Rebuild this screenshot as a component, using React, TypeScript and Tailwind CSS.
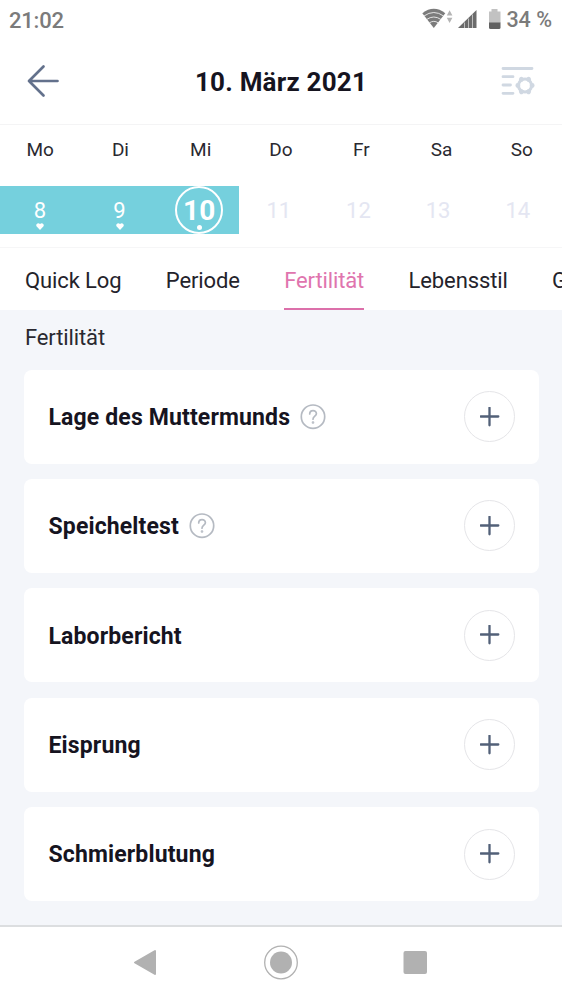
import { useState } from 'react'

const WEEKDAYS = ['Mo', 'Di', 'Mi', 'Do', 'Fr', 'Sa', 'So']

const DAYS = [
  { day: 8, logged: true },
  { day: 9, logged: true },
  { day: 10, today: true },
  { day: 11 },
  { day: 12 },
  { day: 13 },
  { day: 14 },
]

const TABS = ['Quick Log', 'Periode', 'Fertilität', 'Lebensstil', 'G']

const ENTRIES = [
  { title: 'Lage des Muttermunds', help: true },
  { title: 'Speicheltest', help: true },
  { title: 'Laborbericht' },
  { title: 'Eisprung' },
  { title: 'Schmierblutung' },
]

function StatusBar() {
  return (
    <div className="flex h-10 items-center justify-between pr-[10px] pl-[9px] text-[22px] font-medium text-[#7b7b7b]">
      <span className="tracking-[-0.2px]">21:02</span>
      <div className="flex items-center">
        <svg width="90" height="28" viewBox="0 0 90 28" className="mr-[-4px]">
          {/* wifi with traffic arrows */}
          <path d="M2.300 7.200 Q13.800 -1.500 25.300 7.200 L13.800 22 Z" fill="#7b7b7b" />
          <path d="M4 10 Q13.800 3 23.600 10 M6.600 13.500 Q13.800 8.500 21 13.500 M9.300 16.900 Q13.800 13.800 18.300 16.900" fill="none" stroke="#eee" strokeWidth="0.900" />
          <path d="M26.800 9.500 L29.600 4.200 L32.400 9.500 Z M26.800 11.800 L29.600 17.100 L32.400 11.800 Z" fill="#b4b4b4" />
          {/* mobile signal */}
          <path d="M38 22 L56.500 4 V22 Z" fill="#6b6b6b" />
          <path d="M44.500 16.500 V22 M48.500 12.500 V22 M52.500 8.500 V22" stroke="#bdbdbd" strokeWidth="1" />
          {/* battery */}
          <path d="M71.500 3 H77.500 V5.500 H80.500 V17 H69 V5.500 H71.500 Z" fill="#c2c2c2" />
          <path d="M69 16.500 H80.500 V21.500 Q80.500 23 79 23 H70.500 Q69 23 69 21.500 Z" fill="#616161" />
        </svg>
        <span className="text-[21.500px] font-medium">34 %</span>
      </div>
    </div>
  )
}

function Header() {
  return (
    <header className="flex h-[85px] items-center justify-between border-b border-[#f4f4f5] pr-[26px] pl-[26px]">
      <button aria-label="Zurück">
        <svg width="36" height="36" viewBox="0 0 36 36" fill="none" stroke="#63718c" strokeWidth="2.700" strokeLinecap="round" strokeLinejoin="round">
          <path d="M31.500 17 H3 M17.500 2.500 L3 17 L17.500 31.500" />
        </svg>
      </button>
      <h1 className="text-[26px] font-bold tracking-[0.2px] text-[#16141f]">10. März 2021</h1>
      <button aria-label="Einstellungen">
        <svg width="36" height="36" viewBox="0 0 36 36" fill="none" stroke="#d0d8e2" strokeWidth="2.800" strokeLinecap="round">
          <path d="M3 4.500 H32 M3 12.700 H13 M3 21 H10.500 M3 29.300 H13" />
          <circle cx="25" cy="21.500" r="6.500" strokeWidth="3" />
          <path d="M17.800 21.500 h.1 M32.200 21.500 h-.1 M21.400 15.200 l.1 .1 M28.600 15.200 l-.1 .1 M21.400 27.800 l.1 -.1 M28.600 27.800 l-.1 -.1" strokeWidth="4.800" />
        </svg>
      </button>
    </header>
  )
}

function Calendar() {
  return (
    <section className="h-[123px] border-b border-[#f6f6f7]">
      <div className="grid h-[61px] grid-cols-7 pt-[11.500px] text-center text-[19px] leading-[26px] text-[#2a2930]">
        {WEEKDAYS.map((name) => (
          <span key={name}>{name}</span>
        ))}
      </div>
      <div className="grid h-[47px] w-[557.600px] grid-cols-7">
        {DAYS.map(({ day, logged, today }) => (
          <div
            key={day}
            className={`relative flex items-center justify-center ${
              logged || today ? 'bg-[#75d0dd] text-white' : 'text-[#e4e6f2]'
            }`}
          >
            {today ? (
              <span className="flex size-12 shrink-0 items-center justify-center rounded-full border-2 border-white pt-[2px] text-[28px] font-bold">
                {day}
              </span>
            ) : (
              <span className="text-[22px]">{day}</span>
            )}
            {logged && (
              <svg className="absolute top-[37px] left-[36px]" width="8" height="7" viewBox="0 0 8 7" fill="#fff">
                <path d="M4 7 L.7 3.600 C-.8 1.700 1.600 -1.200 4 1 C6.400 -1.200 8.800 1.700 7.300 3.600 Z" />
              </svg>
            )}
            {today && <span className="absolute top-[39px] left-[37.500px] size-[5px] rounded-full bg-white" />}
          </div>
        ))}
      </div>
    </section>
  )
}

function PlusButton({ label }: { label: string }) {
  return (
    <button
      aria-label={`${label} hinzufügen`}
      className="flex size-[51px] items-center justify-center rounded-full border border-[#e5e5e8]"
    >
      <svg width="20" height="20" viewBox="0 0 20 20" fill="none" stroke="#526078" strokeWidth="2.300" strokeLinecap="round">
        <path d="M9.500 .7 V18.300 M.7 9.500 H18.300" />
      </svg>
    </button>
  )
}

function HelpIcon() {
  return (
    <svg className="ml-[10px]" width="26" height="26" viewBox="0 0 26 26" fill="none" stroke="#b5bac2" strokeWidth="1.700" strokeLinecap="round">
      <circle cx="13" cy="12.700" r="11.700" />
      <path d="M9.700 10 C9.700 5.400 16.400 5.600 16.400 9.700 C16.400 12.100 13 12.400 13 15.200" />
      <circle cx="13" cy="18.500" r=".5" />
    </svg>
  )
}

export default function App() {
  const [activeTab, setActiveTab] = useState('Fertilität')

  return (
    <div className="flex h-[1000px] w-[562px] flex-col overflow-hidden bg-white font-['Roboto',sans-serif]">
      <StatusBar />
      <Header />
      <Calendar />

      <nav className="flex h-[62px] shrink-0 gap-[44.400px] overflow-hidden pl-[25px] text-[22px] tracking-[-0.120px] whitespace-nowrap">
        {TABS.map((tab) => (
          <button
            key={tab}
            onClick={() => setActiveTab(tab)}
            className={`shrink-0 border-b-2 pt-[4px] ${
              tab === activeTab ? 'border-[#dc70aa] text-[#e075ae]' : 'border-transparent text-[#24232b]'
            }`}
          >
            {tab}
          </button>
        ))}
      </nav>

      <main className="h-[615px] shrink-0 bg-[#f4f6fa] pr-[23px] pl-6">
        <h2 className="h-[59.600px] pt-[12.500px] pl-px text-[22px] leading-[30px] tracking-[-0.120px] text-[#2a2930]">
          Fertilität
        </h2>
        <div className="flex flex-col gap-[15.400px]">
          {ENTRIES.map(({ title, help }) => (
            <div key={title} className="flex h-[94px] items-center rounded-lg bg-white pr-6 pl-[24.500px]">
              <span className="pt-[3px] text-[23px] font-bold tracking-[0.140px] text-[#16141f]">{title}</span>
              {help && <HelpIcon />}
              <div className="ml-auto">
                <PlusButton label={title} />
              </div>
            </div>
          ))}
        </div>
      </main>

      {/* Android navigation bar */}
      <footer className="flex flex-1 justify-center border-t-2 border-[#dcdee0]">
        <svg width="562" height="73" viewBox="0 0 562 73" fill="#b1b1b1">
          <path d="M135 35.500 L155 24 V47 Z" stroke="#b1b1b1" strokeWidth="2" strokeLinejoin="round" />
          <circle cx="281" cy="35.500" r="11" />
          <circle cx="281" cy="35.500" r="16.300" fill="none" stroke="#b1b1b1" strokeWidth="1.300" />
          <rect x="403.500" y="24" width="23.500" height="23" rx="2" />
        </svg>
      </footer>
    </div>
  )
}
